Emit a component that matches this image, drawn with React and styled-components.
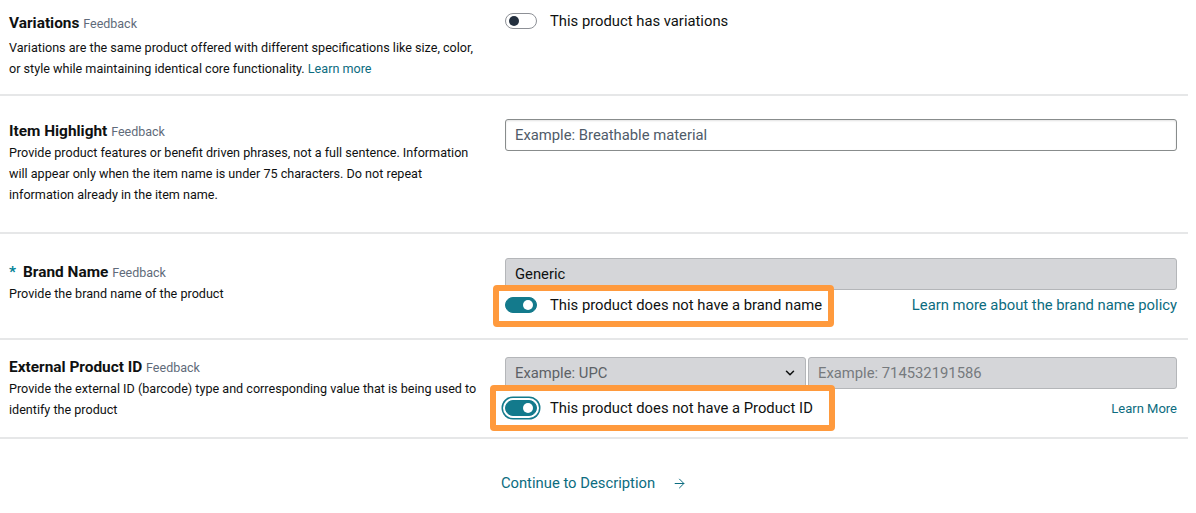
import styled, { createGlobalStyle } from "styled-components";
import { ChevronDown, ArrowRight } from "lucide-react";

const GlobalStyle = createGlobalStyle`
    body {
        margin: 0;
        background: #FFFFFF;
        font-family: Roboto, "Liberation Sans", sans-serif;
        color: #0F1111;
    }
`;

export default function App() {
    return (
        <>
            <GlobalStyle />
            <Page>
                <Section $top={9} $bottom={15}>
                    <Info $offset={4}>
                        <Title>Variations <Feedback>Feedback</Feedback></Title>
                        <Description $gap={3}>
                            Variations are the same product offered with different specifications like size, color,
                            or style while maintaining identical core functionality. <Link>Learn more</Link>
                        </Description>
                    </Info>
                    <Controls>
                        <ToggleRow>
                            <Toggle />
                            <ToggleLabel>This product has variations</ToggleLabel>
                        </ToggleRow>
                    </Controls>
                </Section>

                <Section $top={23} $bottom={27}>
                    <Info $offset={2}>
                        <Title>Item Highlight <Feedback>Feedback</Feedback></Title>
                        <Description>
                            Provide product features or benefit driven phrases, not a full sentence. Information
                            will appear only when the item name is under 75 characters. Do not repeat
                            information already in the item name.
                        </Description>
                    </Info>
                    <Controls>
                        <TextInput placeholder="Example: Breathable material" />
                    </Controls>
                </Section>

                <Section $top={24} $bottom={21}>
                    <Info $offset={4}>
                        <Title><Required>*</Required>Brand Name <Feedback>Feedback</Feedback></Title>
                        <Description>Provide the brand name of the product</Description>
                    </Info>
                    <Controls>
                        <TextInput disabled defaultValue="Generic" />
                        <OptionRow $gap={3}>
                            <Highlight $inset="-8px -12px -10px -12px">
                                <ToggleRow>
                                    <Toggle $on />
                                    <ToggleLabel>This product does not have a brand name</ToggleLabel>
                                </ToggleRow>
                            </Highlight>
                            <Link $size={14.8}>Learn more about the brand name policy</Link>
                        </OptionRow>
                    </Controls>
                </Section>

                <Section $top={17} $bottom={17}>
                    <Info>
                        <Title>External Product ID <Feedback>Feedback</Feedback></Title>
                        <Description>
                            Provide the external ID (barcode) type and corresponding value that is being used to
                            identify the product
                        </Description>
                    </Info>
                    <Controls>
                        <IdFields>
                            <Select>
                                <span>Example: UPC</span>
                                <ChevronDown size={14} strokeWidth={2.6} color="#0F1111" />
                            </Select>
                            <TextInput disabled placeholder="Example: 714532191586" />
                        </IdFields>
                        <OptionRow $gap={7}>
                            <Highlight $inset="-11px -22px -11px -15px">
                                <ToggleRow>
                                    <Toggle $on $focused />
                                    <ToggleLabel>This product does not have a Product ID</ToggleLabel>
                                </ToggleRow>
                            </Highlight>
                            <Link $size={13}>Learn More</Link>
                        </OptionRow>
                    </Controls>
                </Section>

                <Footer>
                    <ContinueButton>
                        Continue to Description
                        <ArrowRight size={15} strokeWidth={1.6} />
                    </ContinueButton>
                </Footer>
            </Page>
        </>
    );
}

const Page = styled.div`
    width: 1188px;
`;

const Section = styled.section`
    display: grid;
    grid-template-columns: 482px 1fr;
    column-gap: 14px;
    padding: ${props => props.$top}px 11px ${props => props.$bottom}px 9px;
    border-bottom: 2px solid #E6E7E8;
`;

const Info = styled.div`
    padding-top: ${props => props.$offset || 0}px;
`;

const Title = styled.div`
    font-size: 15.4px;
    line-height: 21px;
    font-weight: 700;
    color: #0F1111;
`;

const Required = styled.span`
    color: #008296;
    margin-right: 7px;
`;

const Feedback = styled.span`
    font-size: 12.5px;
    font-weight: 400;
    color: #5F6B7A;
`;

const Description = styled.p`
    max-width: 473px;
    margin: ${props => props.$gap || 0}px 0 0;
    font-size: 12.6px;
    line-height: 21px;
    color: #0F1111;
`;

const Link = styled.a`
    color: #0C6C80;
    font-size: ${props => props.$size ? `${props.$size}px` : "inherit"};
    cursor: pointer;
`;

const Controls = styled.div`
    display: flex;
    flex-direction: column;
`;

const TextInput = styled.input`
    box-sizing: border-box;
    width: 100%;
    height: 32px;
    padding: 0 9px;
    border: 1px solid #888C8C;
    border-radius: 3px;
    box-shadow: inset 0 1px 2px rgba(15, 17, 17, 0.12);
    background: #FFFFFF;
    font-family: inherit;
    font-size: 14.8px;
    color: #0F1111;

    &::placeholder {
        color: #4F5B69;
    }

    &:disabled {
        background: #D5D6D9;
        border-color: #B4B6B9;
        box-shadow: none;
        color: #0F1111;
    }

    &:disabled::placeholder {
        color: #767A7E;
    }
`;

const IdFields = styled.div`
    display: grid;
    grid-template-columns: 301px 1fr;
    gap: 2px;
`;

const Select = styled.div`
    box-sizing: border-box;
    height: 32px;
    display: flex;
    align-items: center;
    justify-content: space-between;
    padding: 0 8px 0 9px;
    background: #D5D6D9;
    border: 1px solid #B4B6B9;
    border-radius: 3px;
    font-size: 14.8px;
    color: #5C6166;
`;

const OptionRow = styled.div`
    display: flex;
    align-items: center;
    justify-content: space-between;
    margin-top: ${props => props.$gap}px;
`;

const Highlight = styled.div`
    position: relative;

    &::after {
        content: "";
        position: absolute;
        inset: ${props => props.$inset};
        border: 6px solid #FF9A3D;
        border-radius: 4px;
        pointer-events: none;
    }
`;

const ToggleRow = styled.label`
    display: inline-flex;
    align-items: center;
    gap: 13px;
    height: 24px;
`;

const Toggle = styled.span`
    position: relative;
    box-sizing: border-box;
    width: 32px;
    height: 16px;
    border-radius: 8px;
    background: ${props => props.$on ? "#137A8C" : "#FFFFFF"};
    border: 1px solid ${props => props.$on ? "#137A8C" : "#8D9096"};
    box-shadow: ${props => props.$focused ? "0 0 0 2px #FFFFFF, 0 0 0 3.5px #137A8C" : "none"};

    &::after {
        content: "";
        position: absolute;
        top: 2px;
        left: ${props => props.$on ? "17px" : "3px"};
        width: 10px;
        height: 10px;
        border-radius: 50%;
        background: ${props => props.$on ? "#FFFFFF" : "#232F3E"};
    }
`;

const ToggleLabel = styled.span`
    font-size: 14.8px;
    color: #0F1111;
`;

const Footer = styled.div`
    display: flex;
    justify-content: center;
    padding-top: 35px;
`;

const ContinueButton = styled.button`
    display: flex;
    align-items: center;
    gap: 17px;
    border: none;
    background: none;
    padding: 0;
    font-family: inherit;
    font-size: 14.8px;
    color: #0C6C80;
    cursor: pointer;
`;
